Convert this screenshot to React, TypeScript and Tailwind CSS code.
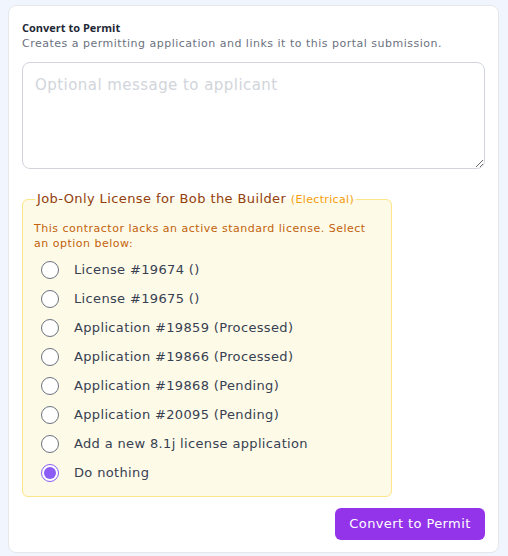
import React, { useState } from "react";

const options = [
  "License #19674 ()",
  "License #19675 ()",
  "Application #19859 (Processed)",
  "Application #19866 (Processed)",
  "Application #19868 (Pending)",
  "Application #20095 (Pending)",
  "Add a new 8.1j license application",
  "Do nothing",
];

export default function App() {
  const [sel, setSel] = useState(7);
  return (
    <div className="min-h-[556px] w-full bg-[#f1f5fd] px-2 pt-[5px] pb-[3px] font-['DejaVu_Sans',sans-serif]">
      <div className="w-[491px] rounded-lg border border-[#e5e7eb] bg-white px-[13px] pt-[14px] pb-[12px] flex flex-col">
        <div className="font-['Open_Sans',sans-serif] text-[11px] font-bold leading-[16px] text-[#1f2937]">Convert to Permit</div>
        <div className="text-[11px] leading-[16px] tracking-[0.5px] text-[#6b7280]">
          Creates a permitting application and links it to this portal submission.
        </div>
        <textarea
          placeholder="Optional message to applicant"
          className="mt-[10px] h-[107px] w-[463px] shrink-0 rounded-lg border border-[#d1d5db] px-3 py-[10px] text-[15px] leading-[24px] tracking-[0.45px] text-gray-700 placeholder:text-[#d1d5db] outline-none"
        />
        <fieldset className="mt-[21px] w-[370px] rounded-md border border-[#fde68a] bg-[#fefae8] pl-[11px] pr-3 pb-[9px]">
          <legend className="ml-[1px] px-[2px] text-[13px] leading-[18px] tracking-[0.4px] text-[#92400e]">
            Job-Only License for Bob the Builder{" "}
            <span className="text-[11px] tracking-[0.35px] text-[#f59e0b]">(Electrical)</span>
          </legend>
          <p className="mt-[12px] text-[11px] leading-[15px] tracking-[0.5px] text-[#c2620a]">
            This contractor lacks an active standard license. Select an option below:
          </p>
          <div className="mt-[4px] flex flex-col">
            {options.map((o, i) => (
              <label
                key={o}
                className="flex h-[29px] cursor-pointer items-center gap-[15px] pl-[7px]"
                onClick={() => setSel(i)}
              >
                <span
                  className={
                    i === sel
                      ? "flex h-[18px] w-[18px] items-center justify-center rounded-full border border-[#8b5cf6] bg-white"
                      : "flex h-[18px] w-[18px] items-center justify-center rounded-full border border-[#6b7280] bg-white"
                  }
                >
                  {i === sel && <span className="h-[12px] w-[12px] rounded-full bg-[#8b5cf6]" />}
                </span>
                <span className="text-[13px] leading-[18px] tracking-[0.35px] text-[#374151]">{o}</span>
              </label>
            ))}
          </div>
        </fieldset>
        <div className="mt-[11px] flex justify-end">
          <button className="h-[32px] w-[150px] rounded-md bg-[#9333ea] text-[13px] tracking-[0.4px] text-white">
            Convert to Permit
          </button>
        </div>
      </div>
    </div>
  );
}
